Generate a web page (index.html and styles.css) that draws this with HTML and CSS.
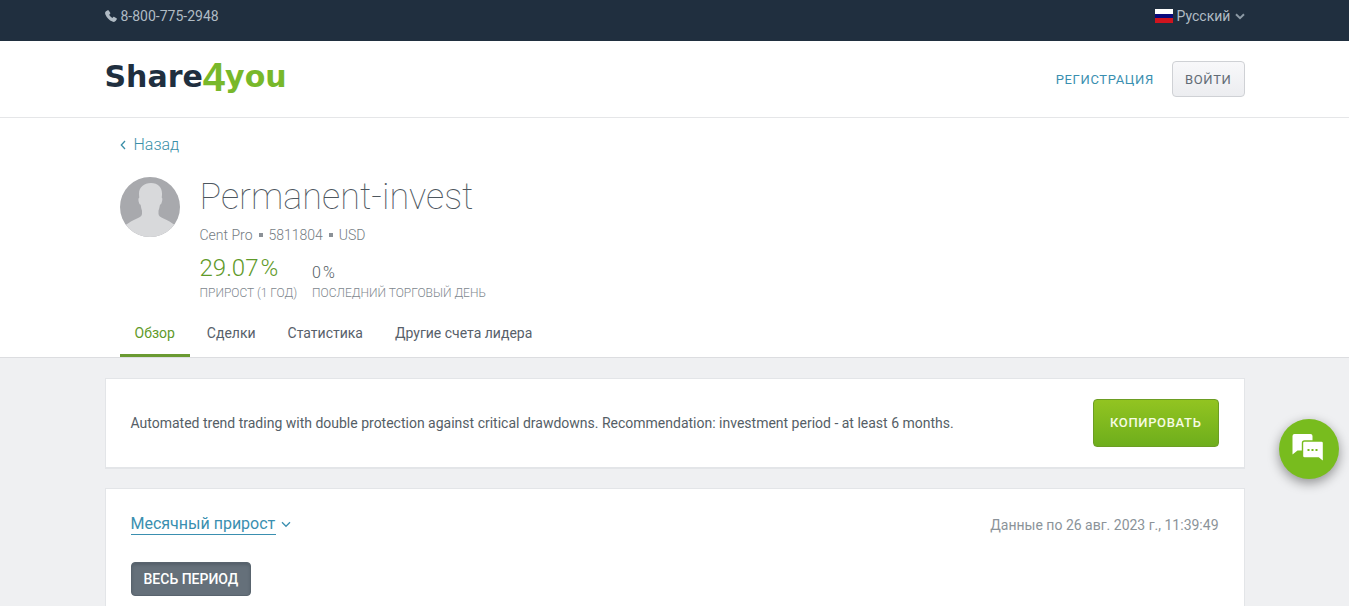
FILE: index.html
```html
<!DOCTYPE html>
<html lang="ru">
<head>
<meta charset="utf-8">
<meta name="viewport" content="width=device-width, initial-scale=1">
<title>Permanent-invest – Share4you</title>
<link rel="stylesheet" href="styles.css">
</head>
<body>
<div class="topbar">
  <div class="container topbar-row">
    <a class="phone" href="tel:88007752948">
      <svg class="phone-icon" viewBox="0 0 12 12" aria-hidden="true"><path d="M2.600.3 1 1.300C0 2-.2 3.200.500 4.800 1.900 8 4.200 10.300 7.400 11.600c1.500.6 2.800.2 3.400-.8l1-1.500c.2-.4.1-.8-.3-1L9.300 6.900c-.4-.2-.8-.1-1 .1l-.9 1C5.900 7.300 4.900 6.200 4.200 4.800l.9-1c.3-.3.3-.6.1-1L3.700.600C3.500.200 3 .1 2.600.3z"/></svg>
      8-800-775-2948
    </a>
    <label class="language">
      <svg class="flag" viewBox="0 0 18 14" role="img" aria-label="Язык"><path fill="#fff" d="M0 0h18v5H0z"/><path fill="#0a0a7c" d="M0 5h18v4H0z"/><path fill="#d0141e" d="M0 9h18v5H0z"/></svg>
      <select class="language-select"><option>Русский</option></select>
      <svg class="language-arrow" viewBox="0 0 10 7" aria-hidden="true"><path d="m1 1.300 4 3.800 4-3.800"/></svg>
    </label>
  </div>
</div>
<header class="header">
  <div class="container header-row">
    <a class="logo" href="#"><span>Share</span><span class="logo-four">4</span><span class="logo-you">you</span></a>
    <nav class="account">
      <a class="register" href="#">РЕГИСТРАЦИЯ</a>
      <button class="login" type="button">ВОЙТИ</button>
    </nav>
  </div>
</header>
<section class="profile">
  <div class="container profile-inner">
    <a class="back" href="#"><svg class="back-arrow" viewBox="0 0 6 10" aria-hidden="true"><path d="M5 1 1.300 5 5 9"/></svg>Назад</a>
    <div class="leader">
      <svg class="avatar" viewBox="0 0 60 60" role="img" aria-label="Permanent-invest">
        <defs><clipPath id="avatar-clip"><circle cx="30" cy="30" r="30"/></clipPath></defs>
        <g clip-path="url(#avatar-clip)">
          <path fill="#a8a9ad" d="M0 0h60v60H0z"/>
          <path fill="#d8d9db" d="M31 6c7 0 11 4.500 11 10.500 0 1.500 0 2.500-.3 4 1 .8.8 3-.2 5.500-.3 1-.9 1.500-1.500 1.700-.5 2.500-1 4.500-1.500 6v3c0 2.500 2 3.500 5 4.800 4.500 2 8 4 11 6.300V60H6V47.800c3-2.300 6.500-4.300 11-6.300 3-1.300 5-2.300 5-4.800v-3c-.5-1.500-1-3.500-1.400-6-.7-.2-1.200-.7-1.500-1.700-.9-2.500-1-4.700.2-5.500-.2-1.500-.3-2.500-.3-4C19 10.500 24 6 31 6z"/>
        </g>
      </svg>
      <div class="leader-info">
        <h1 class="name">Permanent-invest</h1>
        <div class="meta"><span>Cent Pro</span><i class="dot"></i><span>5811804</span><i class="dot"></i><span>USD</span></div>
        <dl class="stats">
          <div class="stat"><dd class="value value-main">29.07<span class="percent">%</span></dd><dt class="stat-label">ПРИРОСТ (1 ГОД)</dt></div>
          <div class="stat"><dd class="value">0<span class="percent">%</span></dd><dt class="stat-label">ПОСЛЕДНИЙ ТОРГОВЫЙ ДЕНЬ</dt></div>
        </dl>
      </div>
    </div>
    <nav class="tabs">
      <a class="tab tab-active" href="#" aria-current="page">Обзор</a>
      <a class="tab" href="#">Сделки</a>
      <a class="tab" href="#">Статистика</a>
      <a class="tab" href="#">Другие счета лидера</a>
    </nav>
  </div>
</section>
<main class="container content">
  <section class="card about">
    <p class="about-text">Automated trend trading with double protection against critical drawdowns. Recommendation: investment period - at least 6 months.</p>
    <button class="copy" type="button">КОПИРОВАТЬ</button>
  </section>
  <section class="card growth">
    <div class="growth-head">
      <label class="chart-picker">
        <select class="chart-select" aria-label="График"><option>Месячный прирост</option></select>
        <svg class="chart-arrow" viewBox="0 0 10 7" aria-hidden="true"><path d="m1 1.300 4 4 4-4"/></svg>
      </label>
      <span class="updated">Данные по 26 авг. 2023 г., 11:39:49</span>
    </div>
    <button class="period" type="button">ВЕСЬ ПЕРИОД</button>
  </section>
</main>
<button class="chat" type="button" aria-label="Чат">
  <svg class="chat-icon" viewBox="0 0 32 28" aria-hidden="true">
    <path fill="#fff" d="M2.500 0h16a2 2 0 0 1 2 2v14.500H5.500L.5 20.500V2a2 2 0 0 1 2-2z"/>
    <path fill="#fff" stroke="#78bc1e" stroke-width="1.400" d="M12.500 7h17a2 2 0 0 1 2 2v19l-5-4h-14a2 2 0 0 1-2-2V9a2 2 0 0 1 2-2z"/>
    <path fill="#78bc1e" d="M15.500 15h2v2h-2zm4 0h2v2h-2zm4 0h2v2h-2z"/>
  </svg>
</button>
</body>
</html>
```

FILE: styles.css
```css
* { box-sizing: border-box; }

body {
  margin: 0;
  background: #eff0f2;
  color: #555e66;
  font-family: Roboto, "Open Sans", sans-serif;
  font-size: 14px;
  line-height: 20px;
}

a { color: inherit; text-decoration: none; }
button, select { font: inherit; cursor: pointer; }
svg { display: block; flex: none; fill: none; }

select {
  appearance: none;
  border: 0;
  padding: 0;
  background: none;
  color: inherit;
}

.container {
  width: 100%;
  max-width: 1140px;
  margin: 0 auto;
}

.topbar { background: #202f3f; color: #b0bbc4; }
.topbar-row {
  display: flex;
  justify-content: space-between;
  padding: 6px 0 15px;
}
.phone { display: flex; align-items: center; gap: 4px; }
.phone-icon { width: 12px; height: 12px; fill: #b0bbc4; }
.language { display: flex; align-items: center; gap: 4px; }
.flag { width: 18px; height: 14px; }
.language-arrow { width: 10px; height: 7px; stroke: #8d9aa5; stroke-width: 2; }

.header { background: #fff; border-bottom: 1px solid #e5e6e8; }
.header-row {
  display: flex;
  justify-content: space-between;
  align-items: center;
  padding: 20px 0;
}
.logo {
  display: flex;
  align-items: center;
  font-family: "DejaVu Sans", sans-serif;
  font-weight: 700;
  font-size: 30px;
  line-height: 32px;
  padding-bottom: 4px;
  color: #202f3f;
}
.logo-four, .logo-you { color: #78b82a; }
.logo-four { font-family: "Liberation Sans", Arial, sans-serif; font-size: 40px; }
.account { display: flex; align-items: center; gap: 18px; }
.register { padding-top: 2px; color: #3a8fb0; font-size: 13px; letter-spacing: .05em; }
.login {
  height: 36px;
  padding: 2px 12px 0;
  border: 1px solid #cfd1d5;
  border-radius: 4px;
  background: linear-gradient(#f8f8fa, #ecedf0);
  color: #626b75;
  font-size: 13px;
  letter-spacing: .05em;
}

.profile { background: #fff; border-bottom: 1px solid #dcdde0; }
.profile-inner { padding: 17px 15px 0; }
.back {
  display: inline-flex;
  align-items: center;
  gap: 8px;
  color: #3a8fa8;
  font-size: 16px;
  font-weight: 300;
}
.back-arrow { width: 6px; height: 10px; stroke: #3a8fa8; stroke-width: 1.3; }
.leader { display: flex; gap: 20px; margin-top: 18px; }
.avatar { width: 60px; height: 60px; margin-top: 4px; }
.name {
  margin: 0;
  font-size: 36px;
  font-weight: 100;
  line-height: 48px;
  color: #4d565e;
}
.meta {
  display: flex;
  align-items: center;
  gap: 6px;
  margin-top: 4px;
  color: #747c83;
  font-weight: 300;
}
.dot { width: 4px; height: 4px; background: #8b9197; }
.stats { display: flex; align-items: flex-end; gap: 15px; margin: 8px 0 0; }
.stat { display: flex; flex-direction: column; }
.value {
  margin: 0;
  font-size: 16px;
  font-weight: 300;
  line-height: 20px;
}
.value-main { color: #5f9a2a; font-size: 24px; line-height: 30px; }
.percent { margin-left: 2px; }
.stat-label { color: #80878e; font-size: 12px; font-weight: 300; }

.tabs { display: flex; gap: 2px; margin-top: 8px; }
.tab { padding: 12px 15px 11px; border-bottom: 3px solid transparent; color: #57606a; }
.tab-active { border-bottom-color: #6a9a32; color: #5f9a2a; }

.content { display: grid; gap: 20px; padding-top: 20px; }
.card {
  background: #fff;
  border: 1px solid #e3e5e8;
  box-shadow: 0 1px #e3e5e8;
  padding: 20px 25px;
}
.about {
  display: flex;
  align-items: center;
  justify-content: space-between;
  gap: 20px;
}
.about-text { margin: 0; }
.copy {
  height: 48px;
  padding: 0 16px;
  border: 1px solid #6c9d23;
  border-radius: 4px;
  background: linear-gradient(#92c421, #6eae1c);
  color: #f6fbe2;
  font-size: 13px;
  font-weight: 500;
  letter-spacing: .05em;
}

.growth { padding-bottom: 40px; }
.growth-head { display: flex; align-items: center; justify-content: space-between; padding-top: 5px; }
.chart-picker { display: flex; align-items: center; gap: 5px; color: #3a8fb0; }
.chart-select { border-bottom: 1px solid #3a8fb0; font-size: 16px; line-height: 20px; border-radius: 0; }
.chart-arrow { width: 10px; height: 7px; stroke: #3a8fb0; stroke-width: 1.3; }
.updated { color: #8b9399; }
.period {
  height: 34px;
  margin-top: 27px;
  padding: 0 12px;
  border: 1px solid #59646e;
  border-radius: 4px;
  background: #65707a;
  box-shadow: inset 0 2px 3px #55606a;
  color: #fff;
  font-weight: 500;
}

.chat {
  position: fixed;
  right: 10px;
  bottom: 127px;
  display: grid;
  place-items: center;
  width: 60px;
  height: 60px;
  padding: 0 2px 2px 0;
  border: 0;
  border-radius: 50%;
  background: #78bc1e;
  box-shadow: 0 4px 12px rgba(0, 0, 0, .4);
}
.chat-icon { width: 32px; height: 28px; overflow: visible; }
```
